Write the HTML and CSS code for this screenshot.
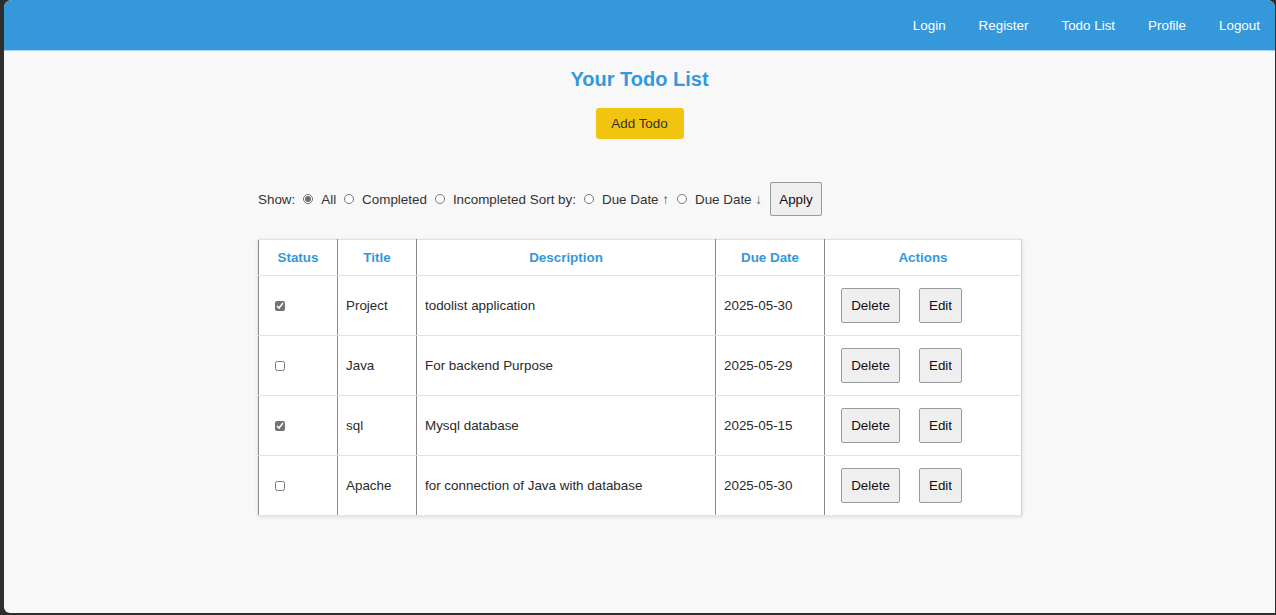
FILE: index.html
```html
<!DOCTYPE html>
<html lang="en">
<head>
<meta charset="utf-8">
<title>Todo List</title>
<link rel="stylesheet" href="styles.css">
</head>
<body>
<div class="window">
  <nav class="navbar">
    <a href="#">Login</a>
    <a href="#">Register</a>
    <a href="#">Todo List</a>
    <a href="#">Profile</a>
    <a href="#">Logout</a>
  </nav>
  <main class="content">
    <h2 class="title">Your Todo List</h2>
    <button class="add-btn">Add Todo</button>
    <div class="panel">
      <form class="filters">
        <span>Show:</span>
        <input type="radio" name="show" checked><span>All</span>
        <input type="radio" name="show"><span>Completed</span>
        <input type="radio" name="show"><span>Incompleted</span>
        <span class="sort">Sort by:</span>
        <input type="radio" name="sort"><span>Due Date <span class="arrow">↑</span></span>
        <input type="radio" name="sort"><span>Due Date <span class="arrow">↓</span></span>
        <button type="button" class="btn apply">Apply</button>
      </form>
      <table class="todos">
        <thead>
          <tr>
            <th class="c-status">Status</th>
            <th class="c-title">Title</th>
            <th class="c-desc">Description</th>
            <th class="c-due">Due Date</th>
            <th class="c-act">Actions</th>
          </tr>
        </thead>
        <tbody>
          <tr>
            <td class="c-status"><input type="checkbox" checked></td>
            <td>Project</td>
            <td>todolist application</td>
            <td>2025-05-30</td>
            <td><div class="actions"><button class="btn">Delete</button><button class="btn">Edit</button></div></td>
          </tr>
          <tr>
            <td class="c-status"><input type="checkbox"></td>
            <td>Java</td>
            <td>For backend Purpose</td>
            <td>2025-05-29</td>
            <td><div class="actions"><button class="btn">Delete</button><button class="btn">Edit</button></div></td>
          </tr>
          <tr>
            <td class="c-status"><input type="checkbox" checked></td>
            <td>sql</td>
            <td>Mysql database</td>
            <td>2025-05-15</td>
            <td><div class="actions"><button class="btn">Delete</button><button class="btn">Edit</button></div></td>
          </tr>
          <tr>
            <td class="c-status"><input type="checkbox"></td>
            <td>Apache</td>
            <td>for connection of Java with database</td>
            <td>2025-05-30</td>
            <td><div class="actions"><button class="btn">Delete</button><button class="btn">Edit</button></div></td>
          </tr>
        </tbody>
      </table>
    </div>
  </main>
</div>
</body>
</html>
```

FILE: styles.css
```css
* { box-sizing: border-box; }

html, body {
  margin: 0;
  height: 100%;
}

body {
  background: #2e2e2e;
  font-family: "Liberation Sans", Arial, sans-serif;
  font-size: 13.4px;
  color: #222;
  padding: 0 1px 2px 4px;
}

.window {
  height: 100%;
  background: #f8f8f8;
  border-radius: 8px 8px 0 6px;
  overflow: hidden;
}

.navbar {
  height: 51px;
  background: #3498db;
  display: flex;
  justify-content: flex-end;
  align-items: center;
  gap: 33px;
  padding: 1px 15px 0 0;
  border-bottom: 1px solid #a9d3f0;
}

.navbar a {
  color: #fff;
  text-decoration: none;
  font-size: 13.4px;
}

.content {
  padding-top: 17px;
  display: flex;
  flex-direction: column;
  align-items: center;
}

.title {
  margin: 0 0 17px;
  font-size: 20px;
  line-height: 23px;
  font-weight: bold;
  color: #3498db;
}

.add-btn {
  width: 88px;
  height: 31px;
  border: none;
  border-radius: 3px;
  background: #f1c40f;
  color: #333;
  font-family: inherit;
  font-size: 13.4px;
  padding: 0;
}

.panel {
  width: 763px;
  margin-top: 43px;
}

.filters {
  display: flex;
  align-items: center;
  height: 34px;
  color: #333;
  white-space: nowrap;
}

.filters input[type="radio"] {
  width: 10px;
  height: 10px;
  margin: 0 8px 0 8px;
  accent-color: #6e6e6e;
}

.filters .sort { margin-left: 4px; }

.arrow {
  font-family: "Liberation Sans", sans-serif;
  color: #555;
}

.btn {
  font-family: inherit;
  font-size: 13.4px;
  color: #111;
  background: #efefef;
  border: 1px solid #9a9a9a;
  border-radius: 2px;
  height: 35px;
  padding: 0 9px;
}

.apply {
  height: 34px;
  width: 52px;
  padding: 0;
  margin-left: 8px;
}

.todos {
  margin-top: 23px;
  width: 763px;
  border-collapse: collapse;
  background: #fff;
  box-shadow: 0 1px 4px rgba(0, 0, 0, 0.12);
  table-layout: fixed;
}

.todos th,
.todos td {
  border-top: 1px solid #e2e2e2;
  border-bottom: 1px solid #e2e2e2;
  border-left: 1px solid #8a8a8a;
  border-right: 1px solid #8a8a8a;
  padding: 0 8px;
  text-align: left;
  font-weight: normal;
  color: #2a2a2a;
}

.todos th:last-child,
.todos td:last-child { border-right-color: #d0d0d0; }

.todos th {
  height: 36px;
  text-align: center;
  font-weight: bold;
  color: #3498db;
}

.todos td { height: 60px; }

.c-status { width: 79px; }
.c-title { width: 79px; }
.c-desc { width: 299px; }
.c-due { width: 109px; }
.c-act { width: 197px; }

.todos td.c-status input {
  width: 10px;
  height: 10px;
  margin: 0 0 0 8px;
  accent-color: #737373;
  vertical-align: middle;
}

.actions {
  display: flex;
  gap: 19px;
  padding-left: 8px;
}

.actions .btn:first-child { width: 59px; padding: 0; }
.actions .btn:last-child { width: 43px; padding: 0; }
```
